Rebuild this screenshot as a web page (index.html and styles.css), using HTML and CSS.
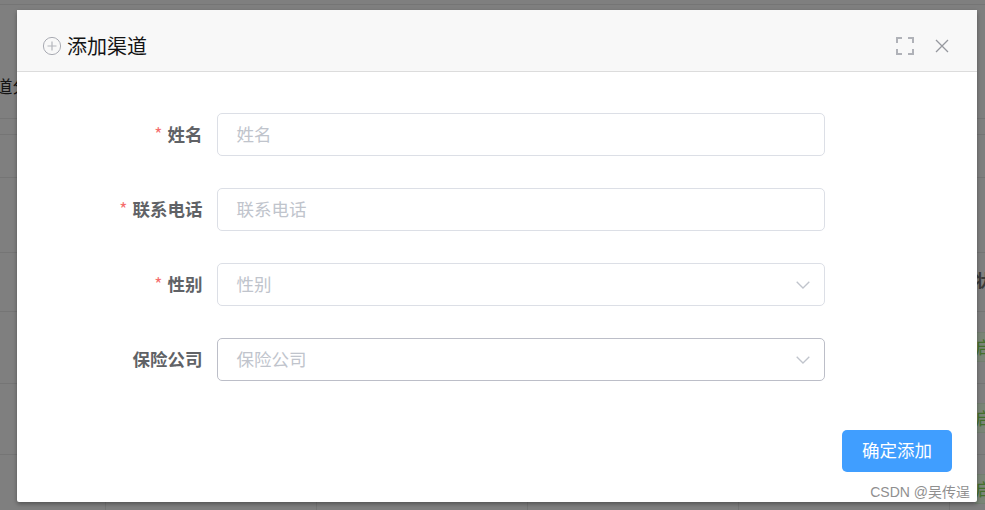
FILE: index.html
```html
<!DOCTYPE html>
<html lang="zh">
<head>
<meta charset="utf-8">
<title>添加渠道</title>
<link rel="stylesheet" href="styles.css">
</head>
<body>
<div class="backdrop">
  <div class="bg-row h-top"></div>
  <div class="bg-row h-head"><span class="bg-head-left">道分</span></div>
  <div class="bg-row h-a"></div>
  <div class="bg-row h-b"></div>
  <div class="bg-row h-c"></div>
  <div class="bg-row h-d"></div>
  <div class="bg-row h-e"></div>
  <div class="bg-row h-f"></div>
  <div class="bg-row h-g"></div>
  <div class="bg-grid"><i></i><i></i><i></i><i></i><i></i></div>
  <div class="bg-right">
    <span class="bg-status">状态</span>
    <span class="bg-tag t1">启</span>
    <span class="bg-tag t2">启</span>
    <span class="bg-tag t3">启</span>
  </div>
</div>
<div class="modal">
  <header class="modal-head">
    <svg class="plus-icon" viewBox="0 0 20 20" width="20" height="20" aria-hidden="true">
      <circle cx="10" cy="10" r="8.6" fill="none" stroke="#a9abb3" stroke-width="1"/>
      <path d="M10 5.5v9M5.5 10h9" fill="none" stroke="#b4b6bc" stroke-width="1.2"/>
    </svg>
    <h1 class="modal-title">添加渠道</h1>
    <svg class="full-icon" viewBox="0 0 18 18" width="18" height="18" aria-hidden="true">
      <path d="M1 6V1h5M12 1h5v5M17 12v5h-5M6 17H1v-5" fill="none" stroke="#b0b2b8" stroke-width="2"/>
    </svg>
    <svg class="close-icon" viewBox="0 0 14 14" width="14" height="14" aria-hidden="true">
      <path d="M1 1l12 12M13 1L1 13" fill="none" stroke="#96989e" stroke-width="1.3"/>
    </svg>
  </header>
  <form class="modal-body">
    <div class="field">
      <label class="label"><span class="req">*</span>姓名</label>
      <div class="control"><span class="ph">姓名</span></div>
    </div>
    <div class="field">
      <label class="label"><span class="req">*</span>联系电话</label>
      <div class="control"><span class="ph">联系电话</span></div>
    </div>
    <div class="field">
      <label class="label"><span class="req">*</span>性别</label>
      <div class="control"><span class="ph">性别</span>
        <svg class="chev" viewBox="0 0 14 8" width="14" height="8" aria-hidden="true"><path d="M.7.7L7 7l6.3-6.3" fill="none" stroke="#c0c4cc" stroke-width="1.3"/></svg>
      </div>
    </div>
    <div class="field">
      <label class="label">保险公司</label>
      <div class="control hover"><span class="ph">保险公司</span>
        <svg class="chev" viewBox="0 0 14 8" width="14" height="8" aria-hidden="true"><path d="M.7.7L7 7l6.3-6.3" fill="none" stroke="#c0c4cc" stroke-width="1.3"/></svg>
      </div>
    </div>
  </form>
  <footer class="modal-foot">
    <button class="btn" type="button">确定添加</button>
  </footer>
</div>
<div class="watermark">CSDN @吴传逞</div>
</body>
</html>
```

FILE: styles.css
```css
* { box-sizing: border-box; }
html, body { margin: 0; height: 100%; }
body {
  position: relative;
  width: 985px;
  height: 510px;
  overflow: hidden;
  background: #7f7f7f;
  font-family: "Noto Sans CJK SC", "Liberation Sans", sans-serif;
}
.backdrop { position: absolute; inset: 0; overflow: hidden; }
.bg-row { border-bottom: 1px solid #757575; }
.h-top { height: 5px; }
.h-head { height: 114px; position: relative; }
.h-a { height: 16px; }
.h-b { height: 43px; }
.h-c { height: 75px; }
.h-d { height: 59px; }
.h-e { height: 72px; }
.h-f { height: 71px; }
.h-g { height: 200px; border-bottom: 0; }
.bg-head-left {
  position: absolute; left: -5px; top: 69px;
  font-size: 17.5px; line-height: 24px; color: #141414;
  white-space: nowrap;
}
.bg-grid {
  position: absolute; left: 105px; bottom: 0; height: 55px;
  display: flex; gap: 210px;
}
.bg-grid i { width: 1px; background: #757575; }
.bg-right { position: absolute; left: 975px; top: 0; width: 10px; height: 510px; }
.bg-status {
  position: absolute; left: 0; top: 268px; white-space: nowrap;
  font-size: 17.5px; line-height: 24px; font-weight: 700; color: #3a3a3a;
}
.bg-tag {
  position: absolute; left: 0; width: 30px; height: 30px;
  background: #7a8577; border-top: 1px solid #737f70; border-bottom: 1px solid #737f70;
  font-size: 17.5px; line-height: 27px; color: #44702c;
}
.t1 { top: 332px; }
.t2 { top: 403px; }
.t3 { top: 474px; }

.modal {
  position: absolute; left: 17px; top: 10px;
  width: 960px; height: 492px;
  background: #fff;
  border-radius: 2px;
  box-shadow: 0 2px 4px rgba(0,0,0,.35);
  display: flex; flex-direction: column;
}
.modal-head {
  height: 62px;
  flex: none;
  background: #f8f8f8;
  border-bottom: 1px solid #dcdcdc;
  display: flex; align-items: center;
  padding: 10px 28px 0 25px;
}
.plus-icon { flex: none; }
.modal-title {
  margin: 0 0 0 5px; flex: 1;
  font-size: 20px; line-height: 28px; font-weight: 400; color: #141414;
}
.full-icon { flex: none; }
.close-icon { flex: none; margin-left: 21px; margin-top: 1px; }
.modal-body {
  flex: 1;
  padding-top: 41px;
  display: flex; flex-direction: column; gap: 32px;
}
.field { display: flex; align-items: center; height: 43px; }
.label {
  width: 185.5px; flex: none; text-align: right;
  font-size: 17.5px; font-weight: 700; color: #606266;
  line-height: 24px; padding-bottom: 2px;
}
.req { color: #f56c6c; font-weight: 400; margin-right: 5px; }
.control {
  margin-left: 14.5px;
  width: 608px; height: 43px;
  border: 1px solid #dcdfe6; border-radius: 5px;
  background: #fff;
  display: flex; align-items: center; justify-content: space-between;
  padding: 0 14px 0 18.5px;
}
.control.hover { border-color: #bcbec8; }
.ph { font-size: 17.5px; line-height: 24px; color: #c0c4cc; padding-bottom: 2px; }
.chev { flex: none; }
.modal-foot {
  flex: none;
  display: flex; justify-content: flex-end;
  padding: 0 25px 30px 0;
}
.btn {
  width: 110px; height: 42px;
  border: 0; border-radius: 5px;
  background: #409eff; color: #fff;
  font: 400 17.5px/24px "Noto Sans CJK SC", "Liberation Sans", sans-serif;
  padding: 0 0 2px;
}
.watermark {
  position: absolute; right: 15px; top: 482px;
  font-family: "Liberation Sans", "Noto Sans CJK SC", sans-serif;
  font-size: 14px; line-height: 20px; color: #8f8f8f;
  text-shadow: 0 0 1px #fff;
  white-space: nowrap;
}
```
